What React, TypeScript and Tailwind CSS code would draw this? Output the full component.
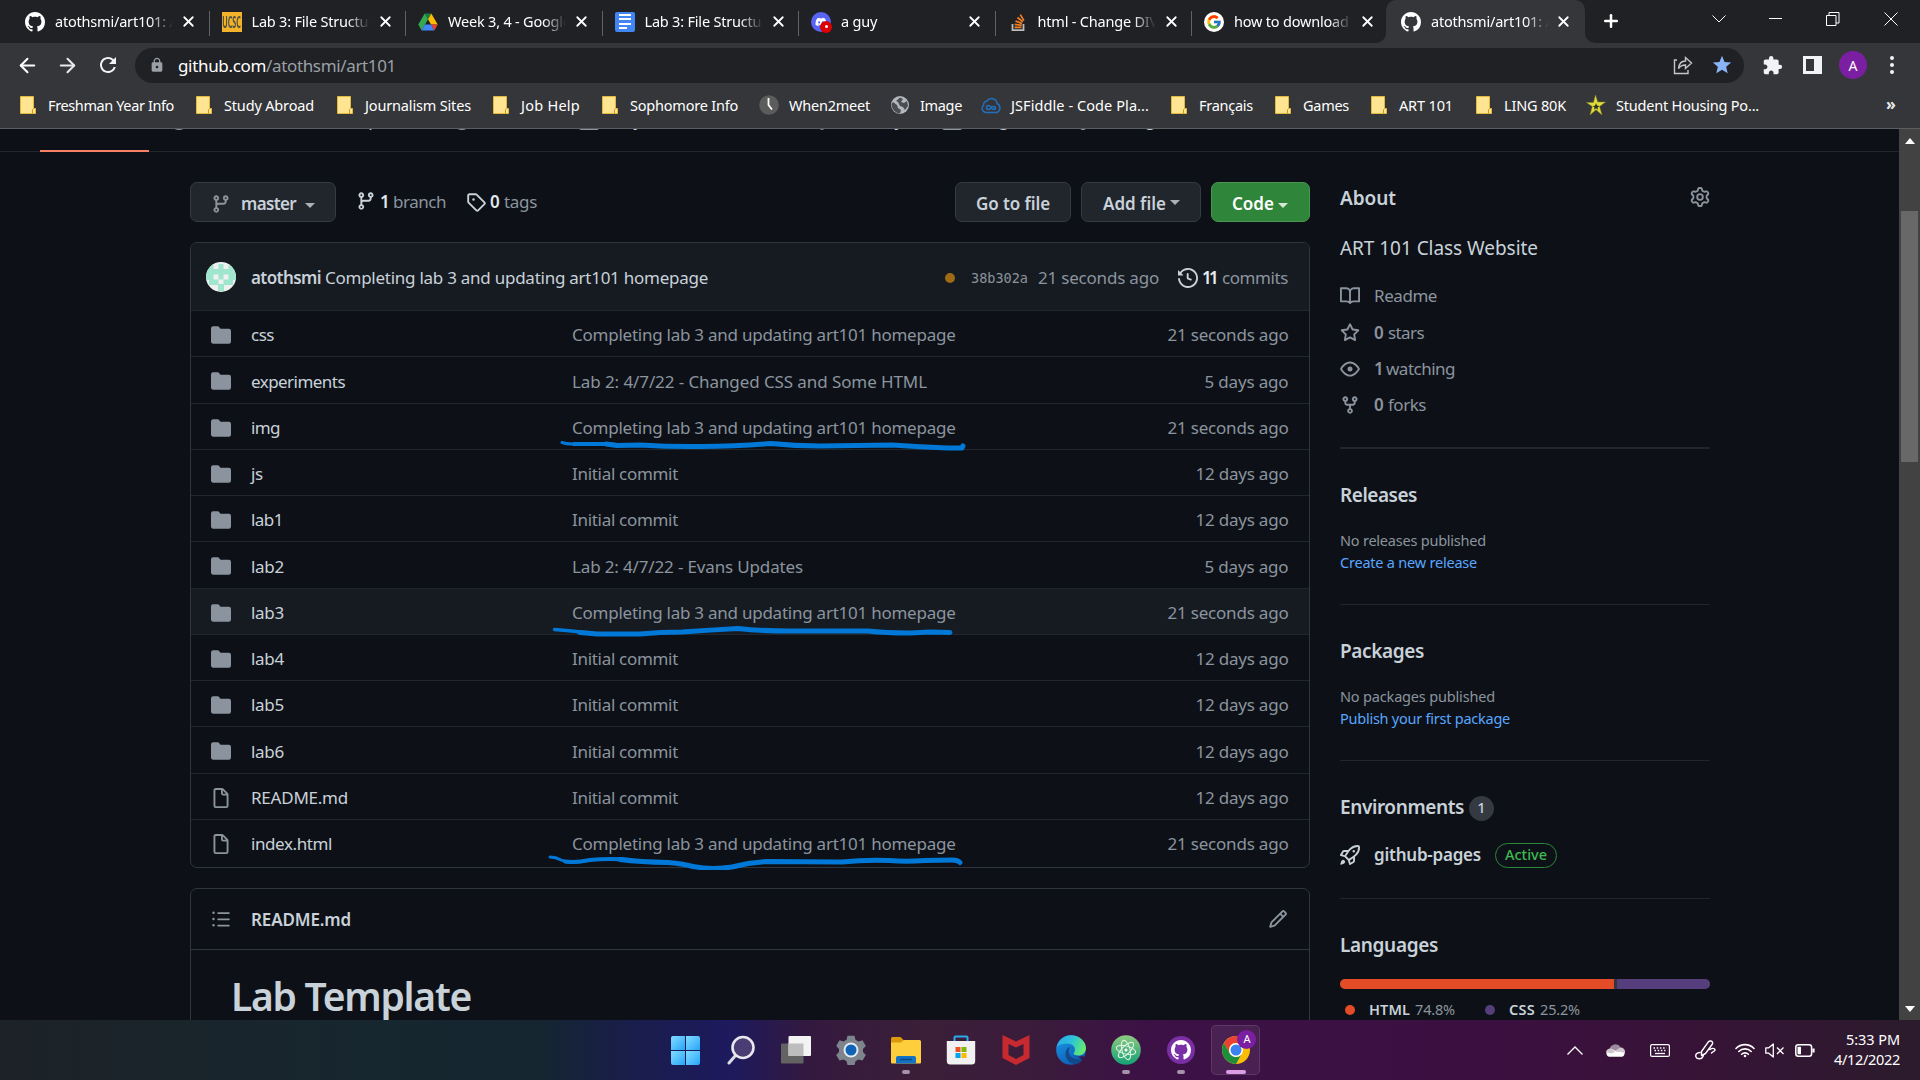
import React, { useLayoutEffect, useRef, useState } from "react";
import { FcGoogle } from "react-icons/fc";
import { FaDiscord } from "react-icons/fa";
import { MdExtension, MdRefresh, MdLock, MdStar } from "react-icons/md";
import { ArrowLeft, ArrowRight, X, Plus } from "lucide-react";

/* Text that is tracked so that it fills exactly `w` pixels. */
function T({ w, className = "", children }: { w: number; className?: string; children: string }) {
  const ref = useRef<HTMLSpanElement>(null);
  const [ls, setLs] = useState(0);
  useLayoutEffect(() => {
    const el = ref.current;
    if (!el) return;
    el.style.letterSpacing = "0px";
    const natural = el.getBoundingClientRect().width;
    const next = (w - natural) / children.length;
    el.style.letterSpacing = next + "px";
    setLs(next);
  }, [w, children]);
  return (
    <span ref={ref} className={"inline-block shrink-0 whitespace-pre " + className} style={{ letterSpacing: ls + "px" }}>
      {children}
    </span>
  );
}

const P = {
  branch:
    "M11.75 2.5a.75.75 0 100 1.5.75.75 0 000-1.5zm-2.25.75a2.25 2.25 0 113 2.122V6A2.5 2.5 0 0110 8.5H6a1 1 0 00-1 1v1.128a2.251 2.251 0 11-1.5 0V5.372a2.25 2.25 0 111.5 0v1.836A2.492 2.492 0 016 7h4a1 1 0 001-1v-.628A2.25 2.25 0 019.5 3.25zM4.25 12a.75.75 0 100 1.5.75.75 0 000-1.5zM3.5 3.25a.75.75 0 111.5 0 .75.75 0 01-1.5 0z",
  tag: "M2.5 7.775V2.75a.25.25 0 01.25-.25h5.025a.25.25 0 01.177.073l6.25 6.25a.25.25 0 010 .354l-5.025 5.025a.25.25 0 01-.354 0l-6.25-6.25a.25.25 0 01-.073-.177zm-1.5 0V2.75C1 1.784 1.784 1 2.75 1h5.025c.464 0 .91.184 1.238.513l6.25 6.25a1.75 1.75 0 010 2.474l-5.026 5.026a1.75 1.75 0 01-2.474 0l-6.25-6.25A1.75 1.75 0 011 7.775zM6 5a1 1 0 100 2 1 1 0 000-2z",
  history:
    "M1.643 3.143L.427 1.927A.25.25 0 000 2.104V5.75c0 .138.112.25.25.25h3.646a.25.25 0 00.177-.427L2.715 4.215a6.5 6.5 0 11-1.18 4.458.75.75 0 10-1.493.154 8.001 8.001 0 101.6-5.684zM7.75 4a.75.75 0 01.75.75v2.992l2.028.812a.75.75 0 01-.557 1.392l-2.5-1A.75.75 0 017 8.25v-3.5A.75.75 0 017.75 4z",
  folder:
    "M1.75 1A1.75 1.75 0 000 2.75v10.5C0 14.216.784 15 1.75 15h12.5A1.75 1.75 0 0016 13.25v-8.5A1.75 1.75 0 0014.25 3h-6.5a.25.25 0 01-.2-.1l-.9-1.2c-.33-.44-.85-.7-1.4-.7h-3.5z",
  file: "M3.75 1.5a.25.25 0 00-.25.25v12.5c0 .138.112.25.25.25h8.5a.25.25 0 00.25-.25V6H9.75A1.75 1.75 0 018 4.25V1.5H3.75zm5.75.56v2.19c0 .138.112.25.25.25h2.19L9.5 2.06zM2 1.75C2 .784 2.784 0 3.75 0h5.086c.464 0 .909.184 1.237.513l3.414 3.414c.329.328.513.773.513 1.237v9.086A1.75 1.75 0 0112.25 16h-8.5A1.75 1.75 0 012 14.25V1.75z",
  list: "M2 4a1 1 0 100-2 1 1 0 000 2zm3.75-1.5a.75.75 0 000 1.5h8.5a.75.75 0 000-1.5h-8.5zm0 5a.75.75 0 000 1.5h8.5a.75.75 0 000-1.5h-8.5zm0 5a.75.75 0 000 1.5h8.5a.75.75 0 000-1.5h-8.5zM3 8a1 1 0 11-2 0 1 1 0 012 0zm-1 6a1 1 0 100-2 1 1 0 000 2z",
  pencil:
    "M11.013 1.427a1.75 1.75 0 012.474 0l1.086 1.086a1.75 1.75 0 010 2.474l-8.61 8.61c-.21.21-.47.364-.756.445l-3.251.93a.75.75 0 01-.927-.928l.929-3.25a1.75 1.75 0 01.445-.758l8.61-8.61zm1.414 1.06a.25.25 0 00-.354 0L10.811 3.75l1.439 1.44 1.263-1.263a.25.25 0 000-.354l-1.086-1.086zM11.189 6.25L9.75 4.81l-6.286 6.287a.25.25 0 00-.064.108l-.558 1.953 1.953-.558a.249.249 0 00.108-.064l6.286-6.286z",
  book: "M0 1.75A.75.75 0 01.75 1h4.253c1.227 0 2.317.59 3 1.501A3.744 3.744 0 0111.006 1h4.245a.75.75 0 01.75.75v10.5a.75.75 0 01-.75.75h-4.507a2.25 2.25 0 00-1.591.659l-.622.621a.75.75 0 01-1.06 0l-.622-.621A2.25 2.25 0 005.258 13H.75a.75.75 0 01-.75-.75V1.75zm8.755 3a2.25 2.25 0 012.25-2.25H14.5v9h-3.757c-.71 0-1.4.201-1.992.572l.004-7.322zm-1.504 7.324l.004-5.073-.002-2.253A2.25 2.25 0 005.003 2.5H1.5v9h3.757a3.75 3.75 0 011.994.574z",
  star: "M8 .25a.75.75 0 01.673.418l1.882 3.815 4.21.612a.75.75 0 01.416 1.279l-3.046 2.97.719 4.192a.75.75 0 01-1.088.791L8 12.347l-3.766 1.98a.75.75 0 01-1.088-.79l.72-4.194L.818 6.374a.75.75 0 01.416-1.28l4.21-.611L7.327.668A.75.75 0 018 .25zm0 2.445L6.615 5.5a.75.75 0 01-.564.41l-3.097.45 2.24 2.184a.75.75 0 01.216.664l-.528 3.084 2.769-1.456a.75.75 0 01.698 0l2.77 1.456-.53-3.084a.75.75 0 01.216-.664l2.24-2.183-3.096-.45a.75.75 0 01-.564-.41L8 2.694v.001z",
  eye: "M1.679 7.932c.412-.621 1.242-1.75 2.366-2.717C5.175 4.242 6.527 3.5 8 3.5c1.473 0 2.824.742 3.955 1.715 1.124.967 1.954 2.096 2.366 2.717a.119.119 0 010 .136c-.412.621-1.242 1.75-2.366 2.717C10.825 11.758 9.473 12.5 8 12.5c-1.473 0-2.824-.742-3.955-1.715C2.92 9.818 2.09 8.69 1.679 8.068a.119.119 0 010-.136zM8 2c-1.981 0-3.67.992-4.933 2.078C1.797 5.169.88 6.423.43 7.1a1.619 1.619 0 000 1.798c.45.678 1.367 1.932 2.637 3.024C4.329 13.008 6.019 14 8 14c1.981 0 3.67-.992 4.933-2.078 1.27-1.091 2.187-2.345 2.637-3.023a1.619 1.619 0 000-1.798c-.45-.678-1.367-1.932-2.637-3.023C11.671 2.992 9.981 2 8 2zm0 8a2 2 0 100-4 2 2 0 000 4z",
  fork: "M5 3.25a.75.75 0 11-1.5 0 .75.75 0 011.5 0zm0 2.122a2.25 2.25 0 10-1.5 0v.878A2.25 2.25 0 005.75 8.5h1.5v2.128a2.251 2.251 0 101.5 0V8.5h1.5a2.25 2.25 0 002.25-2.25v-.878a2.25 2.25 0 10-1.5 0v.878a.75.75 0 01-.75.75h-4.5A.75.75 0 015 6.25v-.878zm3.75 7.378a.75.75 0 11-1.5 0 .75.75 0 011.5 0zm3-8.75a.75.75 0 100-1.5.75.75 0 000 1.5z",
  rocket:
    "M14.064 0a8.75 8.75 0 00-6.187 2.563l-.459.458c-.314.314-.616.641-.904.979H3.31a1.75 1.75 0 00-1.49.833L.11 7.607a.75.75 0 00.418 1.11l3.102.954c.037.051.079.1.124.145l2.429 2.428c.046.046.094.088.145.125l.954 3.102a.75.75 0 001.11.418l2.774-1.707a1.75 1.75 0 00.833-1.49V9.485c.338-.288.665-.59.979-.904l.458-.459A8.75 8.75 0 0016 1.936V1.75A1.75 1.75 0 0014.25 0h-.186zM10.5 10.625c-.088.06-.177.118-.266.175l-2.35 1.521.548 1.783 1.949-1.2a.25.25 0 00.119-.213v-2.066zM3.678 8.116L5.2 5.766c.058-.09.117-.178.176-.266H3.309a.25.25 0 00-.213.119l-1.2 1.95 1.782.547zm5.26-4.493A7.25 7.25 0 0114.063 1.5h.186a.25.25 0 01.25.25v.186a7.25 7.25 0 01-2.123 5.127l-.459.458a15.21 15.21 0 01-2.499 2.02l-2.317 1.5-2.143-2.143 1.5-2.317a15.25 15.25 0 012.02-2.5l.458-.458h.002zM12 5a1 1 0 11-2 0 1 1 0 012 0zm-8.44 9.56a1.5 1.5 0 10-2.12-2.12c-.734.73-1.047 2.332-1.15 3.003a.23.23 0 00.265.265c.671-.103 2.273-.416 3.005-1.148z",
  gear: "M8 0a8.2 8.2 0 0 1 .701.031C9.444.095 9.99.645 10.16 1.29l.288 1.107c.018.066.079.158.212.224.231.114.454.243.668.386.123.082.233.09.299.071l1.103-.303c.644-.176 1.392.021 1.82.63.27.385.506.792.704 1.218.315.675.111 1.422-.364 1.891l-.814.806c-.049.048-.098.147-.088.294.016.257.016.515 0 .772-.01.147.038.246.088.294l.814.806c.475.469.679 1.216.364 1.891a7.977 7.977 0 0 1-.704 1.217c-.428.61-1.176.807-1.82.63l-1.102-.302c-.067-.019-.177-.011-.3.071a5.909 5.909 0 0 1-.668.386c-.133.066-.194.158-.211.224l-.29 1.106c-.168.646-.715 1.196-1.458 1.26a8.006 8.006 0 0 1-1.402 0c-.743-.064-1.289-.614-1.458-1.26l-.289-1.106c-.018-.066-.079-.158-.212-.224a5.738 5.738 0 0 1-.668-.386c-.123-.082-.233-.09-.299-.071l-1.103.303c-.644.176-1.392-.021-1.82-.63a8.12 8.12 0 0 1-.704-1.218c-.315-.675-.111-1.422.363-1.891l.815-.806c.05-.048.098-.147.088-.294a6.214 6.214 0 0 1 0-.772c.01-.147-.038-.246-.088-.294l-.815-.806C.635 6.045.431 5.298.746 4.623a7.92 7.92 0 0 1 .704-1.217c.428-.61 1.176-.807 1.82-.63l1.102.302c.067.019.177.011.3-.071.214-.143.437-.272.668-.386.133-.066.194-.158.211-.224l.29-1.106C6.009.645 6.556.095 7.299.03 7.53.01 7.764 0 8 0Zm-.571 1.525c-.036.003-.108.036-.137.146l-.289 1.105c-.147.561-.549.967-.998 1.189-.173.086-.34.183-.5.29-.417.278-.97.423-1.529.27l-1.103-.303c-.109-.03-.175.016-.195.045-.22.312-.412.644-.573.99-.014.031-.021.11.059.19l.815.806c.411.406.562.957.53 1.456a4.709 4.709 0 0 0 0 .582c.032.499-.119 1.05-.53 1.456l-.815.806c-.081.08-.073.159-.059.19.162.346.353.677.573.989.02.03.085.076.195.046l1.102-.303c.56-.153 1.113-.008 1.53.27.161.107.328.204.501.29.447.222.85.629.997 1.189l.289 1.105c.029.109.101.143.137.146a6.6 6.6 0 0 0 1.142 0c.036-.003.108-.036.137-.146l.289-1.105c.147-.561.549-.967.998-1.189.173-.086.34-.183.5-.29.417-.278.97-.423 1.529-.27l1.103.303c.109.029.175-.016.195-.045.22-.313.411-.644.573-.99.014-.031.021-.11-.059-.19l-.815-.806c-.411-.406-.562-.957-.53-1.456a4.709 4.709 0 0 0 0-.582c-.032-.499.119-1.05.53-1.456l.815-.806c.081-.08.073-.159.059-.19a6.464 6.464 0 0 0-.573-.989c-.02-.03-.085-.076-.195-.046l-1.102.303c-.56.153-1.113.008-1.53-.27a4.44 4.44 0 0 0-.501-.29c-.447-.222-.85-.629-.997-1.189l-.289-1.105c-.029-.11-.101-.143-.137-.146a6.6 6.6 0 0 0-1.142 0ZM11 8a3 3 0 1 1-6 0 3 3 0 0 1 6 0ZM9.5 8a1.5 1.5 0 1 0-3.001.001A1.5 1.5 0 0 0 9.5 8Z",
  github:
    "M8 0C3.58 0 0 3.58 0 8c0 3.54 2.29 6.53 5.47 7.59.4.07.55-.17.55-.38 0-.19-.01-.82-.01-1.49-2.01.37-2.53-.49-2.69-.94-.09-.23-.48-.94-.82-1.13-.28-.15-.68-.52-.01-.53.63-.01 1.08.58 1.23.82.72 1.21 1.87.87 2.33.66.07-.52.28-.87.51-1.07-1.78-.2-3.64-.89-3.64-3.95 0-.87.31-1.59.82-2.15-.08-.2-.36-1.02.08-2.12 0 0 .67-.21 2.2.82.64-.18 1.32-.27 2-.27.68 0 1.36.09 2 .27 1.53-1.04 2.2-.82 2.2-.82.44 1.1.16 1.92.08 2.12.51.56.82 1.27.82 2.15 0 3.07-1.87 3.75-3.65 3.95.29.25.54.73.54 1.48 0 1.07-.01 1.93-.01 2.2 0 .21.15.46.55.38A8.013 8.013 0 0016 8c0-4.42-3.58-8-8-8z",
  issue: "M8 9.5a1.5 1.5 0 100-3 1.5 1.5 0 000 3zM8 0a8 8 0 100 16A8 8 0 008 0zM1.5 8a6.5 6.5 0 1113 0 6.5 6.5 0 01-13 0z",
  board: "M1.75 0A1.75 1.75 0 000 1.75v12.5C0 15.216.784 16 1.75 16h12.5A1.75 1.75 0 0016 14.25V1.75A1.75 1.75 0 0014.25 0zM1.5 1.75h13v12.5h-13z",
  shield: "M8 0L1 2.5V7.5C1 11.5 4 14.8 8 16c4-1.2 7-4.500 7-8.500V2.500z",
};

function Octicon({ d, className = "" }: { d: string; className?: string }) {
  return (
    <svg viewBox="0 0 16 16" fill="currentColor" className={"h-5 w-5 shrink-0 " + className}>
      <path fillRule="evenodd" d={d} />
    </svg>
  );
}

function DriveIcon() {
  return (
    <svg viewBox="0 0 20 18" className="h-[18px] w-5">
      <path d="M6.7 0.600h6.600L10 6.300z" fill="#188038" />
      <path d="M6.700.600L.300 11.600l3.300 5.800L10 6.300z" fill="#34a853" />
      <path d="M13.300.600l6.400 11h-6.600L10 6.300z" fill="#fbbc04" />
      <path d="M6.900 11.600h6.200l3.300 5.800H3.600z" fill="#4285f4" />
      <path d="M13.100 11.600h6.600l-3.300 5.800z" fill="#ea4335" />
    </svg>
  );
}

function DocsIcon() {
  return (
    <span className="flex h-5 w-5 flex-col justify-center gap-[2.500px] rounded-[2px] bg-[#4285f4] px-1">
      <span className="h-[2px] bg-white" />
      <span className="h-[2px] bg-white" />
      <span className="h-[2px] bg-white" />
      <span className="h-[2px] w-2 bg-white" />
    </span>
  );
}

const GithubTab = () => <Octicon d={P.github} className="text-white" />;

const tabs = [
  { title: "atothsmi/art101: ART 101", icon: <GithubTab /> },
  {
    title: "Lab 3: File Structure",
    icon: (
      <span className="flex h-5 w-5 items-center justify-center overflow-hidden bg-[#f3b229]">
        <span className="scale-x-[0.6] scale-y-140 text-[12px] leading-none font-bold text-[#4d5344]">UCSC</span>
      </span>
    ),
  },
  { title: "Week 3, 4 - Google Drive", icon: <DriveIcon /> },
  { title: "Lab 3: File Structure", icon: <DocsIcon /> },
  {
    title: "a guy",
    icon: (
      <span className="relative flex h-5 w-5 items-center justify-center rounded-full bg-[#5865f2]">
        <FaDiscord className="h-3 w-3 text-white" />
        <span className="absolute -right-px -bottom-px flex h-3 w-3 items-center justify-center rounded-full bg-[#dc0000]">
          <span className="h-[3px] w-[3px] rounded-full bg-white" />
        </span>
      </span>
    ),
  },
  {
    title: "html - Change DIV",
    icon: (
      <svg viewBox="0 0 20 20" className="h-5 w-5">
        <path d="M4.500 12v6.200h11V12" fill="none" stroke="#bcbbbb" strokeWidth="1.800" />
        <path d="M6.500 15.400h7M6.700 12.300l6.900 1M7.500 9l6.500 2.600M9.500 5.500l5.300 4.400M12.300 2.600l3.600 6" stroke="#f48024" strokeWidth="1.700" />
      </svg>
    ),
  },
  {
    title: "how to download a",
    icon: (
      <span className="flex h-5 w-5 items-center justify-center rounded-full bg-white">
        <FcGoogle className="h-4 w-4" />
      </span>
    ),
  },
];

function TabText({ children }: { children: string }) {
  return (
    <span className="mb-[2px] ml-2.5 w-[119px] overflow-hidden text-[14.5px] leading-5 tracking-[-0.2px] whitespace-nowrap text-white [mask-image:linear-gradient(90deg,#000_80%,transparent_99%)]">
      {children}
    </span>
  );
}

function TabStrip() {
  return (
    <div className="flex h-[43px] shrink-0 bg-[#202124] pl-[13px]">
      {tabs.map((t, i) => (
        <div key={i} className="flex h-[43px] w-[196.500px] shrink-0 items-center">
          <div className="flex h-full w-full items-center pl-3">
            {t.icon}
            <TabText>{t.title}</TabText>
            <X className="ml-[6px] h-[17px] w-[17px] text-white" strokeWidth={2.5} />
          </div>
          {i < 6 && <div className="mt-1 h-[25px] w-px shrink-0 bg-[#5f6368]" />}
        </div>
      ))}
      <div className="relative -ml-[2.500px] flex h-[43px] w-[199px] items-center rounded-t-[10px] bg-[#35363a] pl-[15px]">
        <svg viewBox="0 0 10 10" className="absolute bottom-0 -left-[10px] h-[10px] w-[10px]">
          <path d="M10 0v10H0A10 10 0 0010 0z" fill="#35363a" />
        </svg>
        <svg viewBox="0 0 10 10" className="absolute -right-[10px] bottom-0 h-[10px] w-[10px]">
          <path d="M0 0v10h10A10 10 0 010 0z" fill="#35363a" />
        </svg>
        <GithubTab />
        <TabText>atothsmi/art101: ART 101</TabText>
        <X className="ml-[5px] h-[17px] w-[17px] text-white" strokeWidth={2.5} />
      </div>
      <Plus className="mt-[11px] ml-[16px] h-5 w-5 text-white" strokeWidth={3} />
      <div className="mr-[22px] ml-auto flex h-[37px] items-center text-white">
        <svg viewBox="0 0 14 8" className="h-2 w-[14px]">
          <path d="M.5.5L7 7l6.500-6.500" fill="none" stroke="currentColor" />
        </svg>
        <span className="ml-[43px] h-px w-[13px] bg-white" />
        <svg viewBox="0 0 14 14" className="ml-[44px] h-[14px] w-[14px]">
          <path d="M.5 3.500h9.500v10H.5zM3 3.500V.5h10v10.500h-3" fill="none" stroke="currentColor" />
        </svg>
        <svg viewBox="0 0 14 14" className="ml-[44px] h-[14px] w-[14px]">
          <path d="M.5.5l13 13M13.500.5l-13 13" fill="none" stroke="currentColor" />
        </svg>
      </div>
    </div>
  );
}

function Toolbar() {
  return (
    <div className="flex h-[44px] shrink-0 items-center bg-[#35363a] pl-[16px]">
      <ArrowLeft className="h-[23px] w-[23px] text-white" strokeWidth={2.1} />
      <ArrowRight className="ml-[17px] h-[23px] w-[23px] text-[#e8eaed]" strokeWidth={2.1} />
      <MdRefresh className="ml-[17px] h-6 w-6 text-[#f1f3f4]" />
      <div className="ml-[15px] flex h-[35px] w-[1609px] items-center rounded-full bg-[#202124] pl-[14px]">
        <MdLock className="h-4 w-4 text-[#9aa0a6]" />
        <span className="ml-[13px] flex pt-px text-[17px] leading-6">
          <T w={88} className="text-white">github.com</T>
          <T w={130} className="text-[#9aa0a6]">/atothsmi/art101</T>
        </span>
        <svg viewBox="0 0 20 20" className="ml-auto h-5 w-5" fill="none" stroke="#c4c7c9" strokeWidth="1.400">
          <path d="M4 5H1.500v13.500h13.500V15M5.500 13.500c.5-5 3.500-7.500 7-7.500V2.500l6 5.500-6 5.500V10c-3 0-5 .5-7 3.500z" />
        </svg>
        <MdStar className="mr-[11px] ml-[18px] h-[22px] w-[22px] text-[#8ab4f8]" />
      </div>
      <MdExtension className="ml-[18px] h-[21px] w-[21px] text-[#f1f3f4]" />
      <span className="ml-[20px] flex h-[18px] w-[19px] border-[3px] border-r-[8px] border-[#f1f3f4]" />
      <span className="ml-[17px] flex h-7 w-7 items-center justify-center rounded-full bg-[#7b1fa2] text-[14px] text-white">A</span>
      <span className="ml-[23px] flex flex-col gap-[3px]">
        <span className="h-1 w-1 rounded-full bg-[#f1f3f4]" />
        <span className="h-1 w-1 rounded-full bg-[#f1f3f4]" />
        <span className="h-1 w-1 rounded-full bg-[#f1f3f4]" />
      </span>
    </div>
  );
}

function YellowFolder() {
  return (
    <svg viewBox="0 0 16 18" className="h-[18px] w-4">
      <path d="M.5.500h13v12h2v5H.5z" fill="#ffe591" stroke="#e3b93c" />
      <path d="M12.500 17.500v-4l1-1" fill="none" stroke="#c79a1e" />
    </svg>
  );
}

const bookmarks: { label: string; x: number; w: number; icon?: React.ReactNode }[] = [
  { label: "Freshman Year Info", x: 18, w: 126 },
  { label: "Study Abroad", x: 194, w: 90 },
  { label: "Journalism Sites", x: 335, w: 106 },
  { label: "Job Help", x: 491, w: 59 },
  { label: "Sophomore Info", x: 600, w: 108 },
  {
    label: "When2meet",
    x: 759,
    w: 81,
    icon: (
      <svg viewBox="0 0 20 20" className="h-5 w-5">
        <circle cx="10" cy="10" r="9.800" fill="#5c5c5c" />
        <path d="M9.500 3v7l3.500 4.500" fill="none" stroke="#fff" strokeWidth="1.800" />
      </svg>
    ),
  },
  {
    label: "Image",
    x: 890,
    w: 42,
    icon: (
      <svg viewBox="0 0 20 20" className="h-5 w-5">
        <circle cx="10" cy="10" r="9" fill="#b4b8bc" />
        <path d="M3 7l4 3 1 3 3 2-1 3.500C5 18 1.500 14 1.500 9zM10 2.500l3 1.500-2 3 3 1 3-2 1 5-3 4-2-3-3-1-2-4-2-1z" fill="#4a4d51" />
      </svg>
    ),
  },
  {
    label: "JSFiddle - Code Pla...",
    x: 981,
    w: 138,
    icon: (
      <svg viewBox="0 0 20 20" className="h-5 w-5" fill="none" stroke="#2270c0" strokeWidth="1.400">
        <path d="M5 17.500a4 4 0 01-2.500-7A4 4 0 016 6a5.500 5.500 0 0110 2.500 4.800 4.800 0 01-.5 9z" />
        <path d="M10 12c-1.500-2-4.500-2-4.500.500s3 2.500 4.500.500 4.500-2 4.500 0-3 2-4.500-1z" strokeWidth="1.600" />
      </svg>
    ),
  },
  { label: "Français", x: 1169, w: 54 },
  { label: "Games", x: 1273, w: 46 },
  { label: "ART 101", x: 1369, w: 54 },
  { label: "LING 80K", x: 1474, w: 62 },
  {
    label: "Student Housing Po...",
    x: 1586,
    w: 143,
    icon: (
      <svg viewBox="0 0 20 20" className="h-5 w-5">
        <path d="M9.500 0l2.200 7h7.800l-6 4.500 2.500 8.500-6-5.300L4 20l2.300-8.500L.5 7.500h7z" fill="#e0dc3c" stroke="#8a8620" strokeWidth=".5" />
        <path d="M10 8l1 2.500 2.500.5-2 1.500.5 2.200-2-1.400-2 1.400.6-2.200-1.800-1.500 2.300-.3z" fill="#2b2b20" />
      </svg>
    ),
  },
];

function Bookmarks() {
  return (
    <div className="flex h-[42px] shrink-0 items-center border-b border-[#5b5d60] bg-[#35363a] pb-[5px] pl-[18px] text-[14.5px] text-white">
      {bookmarks.map((b, i) => (
        <div
          key={b.label}
          className="flex shrink-0 items-center"
          style={{ width: (bookmarks[i + 1]?.x ?? 1880) - b.x }}
        >
          <span className="flex w-[30px] shrink-0 items-center">
            {b.icon ?? <span className="pl-[2px]"><YellowFolder /></span>}
          </span>
          <T w={b.w} className="mb-px leading-5">{b.label}</T>
        </div>
      ))}
      <span className="mb-[3px] ml-[6px] text-[16px] leading-5 font-bold text-[#e8eaed]">»</span>
    </div>
  );
}

const nav = [
  { label: "Code", icon: P.branch, x: 49, w: 40 },
  { label: "Issues", icon: P.issue, x: 168.5, w: 49 },
  { label: "Pull requests", icon: P.branch, x: 283, w: 103 },
  { label: "Actions", icon: P.issue, x: 452, w: 58 },
  { label: "Projects", icon: P.board, x: 579, w: 62 },
  { label: "Wiki", icon: P.book, x: 710, w: 32 },
  { label: "Security", icon: P.shield, x: 812, w: 62 },
  { label: "Insights", icon: P.board, x: 942, w: 62 },
  { label: "Settings", icon: P.gear, x: 1073, w: 61 },
];

function RepoNav() {
  return (
    <div className="h-[23px] shrink-0 overflow-hidden shadow-[inset_0_-1px_0_#21262d]">
      <div className="-mt-[31px] flex h-[43px] items-center pl-[49px] text-[17px] text-[#c9d1d9]">
        {nav.map((n, i) => (
          <div key={n.label} className="flex shrink-0 items-center" style={{ width: (nav[i + 1]?.x ?? 1200) - n.x }}>
            <Octicon d={n.icon} className="mr-[9px] text-[#8b949e]" />
            <T w={n.w} className="leading-6">{n.label}</T>
          </div>
        ))}
      </div>
      <div className="mt-[9px] ml-10 h-[2px] w-[109px] bg-[#f78166]" />
    </div>
  );
}

function Caret({ className = "" }: { className?: string }) {
  return <span className={"h-0 w-0 border-x-[5px] border-t-[5px] border-x-transparent " + className} />;
}

const DONE = "Completing lab 3 and updating art101 homepage";
type Row = { name: string; nw: number; msg: string; mw: number; when: string; file?: boolean; hot?: boolean };
const S21 = "21 seconds ago";
const D12 = "12 days ago";
const rows: Row[] = [
  { name: "css", nw: 23, msg: DONE, mw: 383.5, when: S21 },
  { name: "experiments", nw: 94, msg: "Lab 2: 4/7/22 - Changed CSS and Some HTML", mw: 355, when: "5 days ago" },
  { name: "img", nw: 29, msg: DONE, mw: 383.5, when: S21 },
  { name: "js", nw: 12, msg: "Initial commit", mw: 106, when: D12 },
  { name: "lab1", nw: 32, msg: "Initial commit", mw: 106, when: D12 },
  { name: "lab2", nw: 33, msg: "Lab 2: 4/7/22 - Evans Updates", mw: 231, when: "5 days ago" },
  { name: "lab3", nw: 33, msg: DONE, mw: 383.5, when: S21, hot: true },
  { name: "lab4", nw: 33, msg: "Initial commit", mw: 106, when: D12 },
  { name: "lab5", nw: 33, msg: "Initial commit", mw: 106, when: D12 },
  { name: "lab6", nw: 33, msg: "Initial commit", mw: 106, when: D12 },
  { name: "README.md", nw: 97, msg: "Initial commit", mw: 106, when: D12, file: true },
  { name: "index.html", nw: 81, msg: DONE, mw: 383.5, when: S21, file: true },
];
const whenWidth: Record<string, number> = { [S21]: 121, [D12]: 93, "5 days ago": 84 };

function Actions() {
  return (
    <div className="flex h-10 items-center text-[17px]">
      <div className="flex h-10 w-[146px] items-center rounded-[7px] border border-[#363b42] bg-[#21262d] pt-[3px] pl-5 font-semibold text-[#c9d1d9]">
        <Octicon d={P.branch} className="text-[#8b949e]" />
        <T w={55} className="ml-[10px] leading-6">master</T>
        <Caret className="mt-[3px] ml-[9px] border-t-[#a9b0b8]" />
      </div>
      <div className="flex items-center text-[#8b949e]">
        <Octicon d={P.branch} className="mb-[2px] ml-5 text-[#c9d1d9]" />
        <T w={9} className="ml-[4px] font-semibold text-[#e0e6ec]">1</T>
        <T w={53} className="ml-[4px]">branch</T>
        <Octicon d={P.tag} className="ml-[20px] text-[#c9d1d9]" />
        <T w={10} className="ml-[4px] font-semibold text-[#e0e6ec]">0</T>
        <T w={33} className="ml-[4px]">tags</T>
      </div>
      <div className="ml-auto flex gap-[10px] font-semibold">
        <div className="flex h-10 w-[116px] items-center justify-center rounded-[7px] border border-[#363b42] bg-[#21262d] pt-[3px] text-[#c9d1d9]">
          <T w={74}>Go to file</T>
        </div>
        <div className="flex h-10 w-[120px] items-center rounded-[7px] border border-[#363b42] bg-[#21262d] pt-[3px] pl-[21px] text-[#c9d1d9]">
          <T w={63}>Add file</T>
          <Caret className="mb-[3px] ml-[4px] border-t-[#a9b0b8]" />
        </div>
        <div className="flex h-10 w-[99px] items-center rounded-[7px] border border-[#4a9651] bg-[#2f8539] pt-[3px] pl-[20px] text-white">
          <T w={42}>Code</T>
          <Caret className="mt-[3px] ml-[4px] border-t-[#d5e7d7]" />
        </div>
      </div>
    </div>
  );
}

function Avatar() {
  return (
    <svg viewBox="0 0 30 30" className="mb-px h-[30px] w-[30px] rounded-full">
      <rect width="30" height="30" fill="#f0f0f0" />
      <path d="M3 2h24v5h3v11h-3v5H19v-5h-8v5H3v-5H0V7h3z" fill="#a0e6ce" />
      <path d="M11 17h8v6h-1v6h-6v-6h-1z" fill="#a0e6ce" />
      <path d="M7.500 12.500h5v5h-5zM17.500 12.500h5v5h-5zM7.500 2h5v5h-5zM17.500 2h5v5h-5zM12.500 17.500h5v4.500h-5z" fill="#f0f0f0" />
    </svg>
  );
}

function FileTable() {
  return (
    <div className="relative mt-5 rounded-[7px] border border-[#30363d]">
      <div className="flex h-[67px] items-center rounded-t-[6px] bg-[#161b22] pt-[2px] pr-[21px] pl-[15px] text-[17px] text-[#8b949e]">
        <Avatar />
        <T w={70} className="ml-[15px] font-semibold text-[#c9d1d9]">atothsmi</T>
        <T w={383} className="ml-[4px] text-[#c9d1d9]">{DONE}</T>
        <span className="ml-auto h-[10px] w-[10px] rounded-full bg-[#9e6a15]" />
        <T w={57} className="mt-[2px] ml-[16px] font-['DejaVu_Sans_Mono','Noto_Sans_Mono',monospace] text-[13.5px]">38b302a</T>
        <T w={121} className="ml-[10px]">{S21}</T>
        <Octicon d={P.history} className="ml-[19px] text-[#c9d1d9]" />
        <T w={14} className="ml-[4px] font-semibold text-[#e6edf3]">11</T>
        <T w={66} className="ml-[6px]">commits</T>
      </div>
      {rows.map((r) => (
        <div
          key={r.name}
          className={
            "flex h-[46.250px] items-center border-t border-[#21262d] pt-[3px] pr-[20.500px] pl-[20px] text-[17px] text-[#8b949e] last-of-type:h-[48.500px] last-of-type:pb-[2px] " +
            (r.hot ? "bg-[#161b22]" : "")
          }
        >
          <Octicon d={r.file ? P.file : P.folder} />
          <span className="ml-5 w-[321px]">
            <T w={r.nw} className="text-[#c9d1d9]">{r.name}</T>
          </span>
          <T w={r.mw}>{r.msg}</T>
          <span className="ml-auto">
            <T w={whenWidth[r.when]}>{r.when}</T>
          </span>
        </div>
      ))}
      <svg
        viewBox="190 242 1120 628"
        className="pointer-events-none absolute -top-px -left-px h-[628px] w-[1120px]"
        fill="none"
        stroke="#0078d7"
        strokeWidth="5"
        strokeLinecap="round"
        strokeLinejoin="round"
      >
        <path strokeWidth="3" d="M562 442.500Q566 444 572 444L608 444L617 445" />
        <path strokeWidth="4" d="M574 444L608 444L617 445" />
        <path d="M606 444L617 445.500L640 445Q672 447 700 446.500Q740 446 771 443.500Q795 446 820 446L892 445Q920 447 948 448L962 448M962 447.500L963 446" />
        <path strokeWidth="3.500" d="M554.500 629.500L572 631L597 634" />
        <path d="M580 632.500L597 634L640 634Q660 632 682 632Q710 630 738 628.500Q760 631 790 631L868 631Q885 633 910 633L930 632L950 632.500" />
        <path strokeWidth="3" d="M550 857Q556 857 561 860Q570 864 585 861" />
        <path strokeWidth="4" d="M565 861.500Q575 863 590 860Q610 858 630 860" />
        <path d="M620 859.500Q640 862 668 862.500Q685 864 693 866.500Q712 870 732 867Q750 862 768 861.500L842 862Q865 859.500 890 860.500Q905 862 925 860.500L952 860Q958 860 960 862.500" />
      </svg>
    </div>
  );
}

function Readme() {
  return (
    <div className="mt-5 h-[200px] rounded-[7px] border border-[#30363d]">
      <div className="flex h-[61px] items-center border-b border-[#30363d] pr-[21px] pl-5 text-[#8b949e]">
        <Octicon d={P.list} />
        <T w={100} className="ml-5 text-[17px] font-semibold text-[#c9d1d9]">README.md</T>
        <Octicon d={P.pencil} className="ml-auto" />
      </div>
      <div className="pt-[18px] pl-[40px]">
        <T w={240} className="text-[39px] leading-[56px] font-semibold text-[#c9d1d9]">Lab Template</T>
      </div>
    </div>
  );
}

function Stat({ icon, n, nw, label, lw, className }: { icon: string; n?: string; nw?: number; label: string; lw: number; className: string }) {
  return (
    <div className={"flex h-6 items-center text-[17px] text-[#8b949e] " + className}>
      <Octicon d={icon} className="mr-[14px]" />
      {n && <T w={nw ?? 9} className="mr-[5px] font-semibold">{n}</T>}
      <T w={lw}>{label}</T>
    </div>
  );
}

function Sidebar() {
  return (
    <div className="w-[370px] text-[#c9d1d9]">
      <div className="flex h-7 items-center justify-between">
        <T w={56} className="text-[19px] font-semibold">About</T>
        <Octicon d={P.gear} className="mb-[2px] text-[#8b949e]" />
      </div>
      <T w={198} className="mt-[22px] block text-[19px] leading-7">ART 101 Class Website</T>
      <Stat className="mt-[22px]" icon={P.book} label="Readme" lw={63} />
      <Stat className="mt-[13px]" icon={P.star} n="0" nw={9} label="stars" lw={36} />
      <Stat className="mt-[12px]" icon={P.eye} n="1" nw={7} label="watching" lw={69} />
      <Stat className="mt-[12px]" icon={P.fork} n="0" nw={9} label="forks" lw={38} />
      <div className="mt-[30px] h-[2px] bg-[#21262d]" />
      <T w={77} className="mt-[32px] block text-[19px] leading-7 font-semibold">Releases</T>
      <div className="mt-[20px] flex flex-col text-[14.5px] leading-[22px]">
        <T w={146} className="self-start text-[#8b949e]">No releases published</T>
        <T w={137} className="self-start text-[#58a6ff]">Create a new release</T>
      </div>
      <div className="mt-[31px] h-px bg-[#21262d]" />
      <T w={84} className="mt-[32px] block text-[19px] leading-7 font-semibold">Packages</T>
      <div className="mt-[20px] flex flex-col text-[14.5px] leading-[22px]">
        <T w={155} className="self-start text-[#8b949e]">No packages published</T>
        <T w={170} className="self-start text-[#58a6ff]">Publish your first package</T>
      </div>
      <div className="mt-[31px] h-px bg-[#21262d]" />
      <div className="mt-[32px] flex h-7 items-center">
        <T w={124} className="text-[19px] font-semibold">Environments</T>
        <span className="mt-[2px] ml-[5px] flex h-[25px] w-[25px] items-center justify-center rounded-full bg-[#353a42] text-[14.5px] font-medium">1</span>
      </div>
      <div className="mt-[21px] flex h-[26px] items-center">
        <Octicon d={P.rocket} />
        <T w={107} className="ml-[14px] text-[17px] font-semibold">github-pages</T>
        <span className="ml-[14px] flex h-[25px] w-[62px] items-center justify-center rounded-full border border-[#2a8737] text-[14.5px] font-medium text-[#3fb950]">
          <T w={42}>Active</T>
        </span>
      </div>
      <div className="mt-[30px] h-px bg-[#21262d]" />
      <T w={98} className="mt-[32px] block text-[19px] leading-7 font-semibold">Languages</T>
      <div className="mt-[20px] flex h-[10px] overflow-hidden rounded-full bg-[#30363d]">
        <div className="w-[274px] bg-[#e34c26]" />
        <div className="ml-[3px] flex-1 bg-[#563d7c]" />
      </div>
      <div className="mt-[11px] flex h-5 items-center text-[14.5px] text-[#8b949e]">
        <span className="ml-[5px] h-[10px] w-[10px] rounded-full bg-[#e34c26]" />
        <T w={41} className="ml-[14px] font-semibold text-[#c9d1d9]">HTML</T>
        <T w={40} className="ml-[5px]">74.8%</T>
        <span className="ml-[30px] h-[10px] w-[10px] rounded-full bg-[#563d7c]" />
        <T w={26} className="ml-[14px] font-semibold text-[#c9d1d9]">CSS</T>
        <T w={40} className="ml-[5px]">25.2%</T>
      </div>
    </div>
  );
}

const Edge = () => (
  <svg viewBox="0 0 30 30" className="h-[30px] w-[30px]">
    <defs>
      <linearGradient id="eg" x1="0" y1="0.2" x2="1" y2="0.5">
        <stop offset="0" stopColor="#2aa7e8" />
        <stop offset=".5" stopColor="#2cc3d8" />
        <stop offset="1" stopColor="#66eb6e" />
      </linearGradient>
      <linearGradient id="eb" x1="0" y1="0" x2="0.6" y2="1">
        <stop offset="0" stopColor="#1a9be6" />
        <stop offset="1" stopColor="#0f5bb5" />
      </linearGradient>
    </defs>
    <circle cx="15" cy="15" r="14.800" fill="url(#eb)" />
    <path d="M.5 12.500C2 5 8 .2 15 .2 23.500.2 30 6.500 30 13c0 5-4 7.500-7.500 7.500-3 0-5-1-5-2 0-.8 1.500-1.500 1.500-4 0-3-3-6-8-6-4.500 0-8.500 1.500-10.500 4z" fill="url(#eg)" />
    <path d="M12.500 12.500c-2 1.500-3 4-3 6.500 0 5 4 9.500 10 10 3.500-.8 6.500-3 8.500-6-2 1-4.500 1.500-7 1.200-5-.6-8.500-4-8.500-8.200 0-1.500 1-3 2-3.500z" fill="#114a8b" />
    <path d="M18 20.500c1.500 1.500 5 1.800 8.500.2l3.500 3-2 3.300-4-4z" fill="#3d1347" opacity=".9" />
  </svg>
);

const Chrome = () => (
  <svg viewBox="0 0 28 28" className="h-7 w-7">
    <circle cx="14" cy="14" r="14" fill="#fbbc04" />
    <path d="M1.900 7A14 14 0 0126.100 7H14a7 7 0 00-6.100 10.500z" fill="#ea4335" />
    <path d="M1.900 7l6.060 10.500A7 7 0 0014 21c1 0 3 0 5-2l-5 9A14 14 0 011.900 7z" fill="#1e8e3e" />
    <circle cx="14" cy="14" r="7" fill="#fff" />
    <circle cx="14" cy="14" r="5.500" fill="#3b82f0" />
  </svg>
);

const GearApp = () => (
  <svg viewBox="0 0 30 30" className="h-[30px] w-[30px]">
    <path
      d="M11.500.800h7l1 4 3 1.700 4-1.200 3.300 5.700-2.800 3v3l2.800 3-3.300 5.500-4-1-3 1.700-1 3.700h-7l-1-3.700-3-1.700-4 1L.2 20l2.800-3v-3l-2.800-3 3.300-5.700 4 1.200 3-1.700z"
      fill="#7d848c"
    />
    <circle cx="15" cy="15" r="7.500" fill="#e5eaf0" />
    <circle cx="15" cy="15" r="5.500" fill="#0f63b5" />
  </svg>
);

const apps: { icon: React.ReactNode; run?: boolean }[] = [
  {
    icon: (
      <span className="grid h-[29px] w-[29px] grid-cols-2 gap-px overflow-hidden rounded-[2px] [&>span]:bg-linear-to-br [&>span]:from-[#7fdcff] [&>span]:to-[#1fa5f8]">
        <span /><span /><span /><span />
      </span>
    ),
  },
  {
    icon: (
      <svg viewBox="0 0 30 30" className="h-[30px] w-[30px]">
        <path d="M9.500 20.500L3 28" stroke="#dcdce4" strokeWidth="3" strokeLinecap="round" />
        <circle cx="17" cy="12.500" r="10.500" fill="#4a3d74" stroke="#e8e8ee" strokeWidth="2.600" />
      </svg>
    ),
  },
  {
    icon: (
      <svg viewBox="0 0 30 30" className="h-[30px] w-[30px]">
        <rect x="0" y="8.500" width="22.500" height="20" rx="1" fill="#636363" />
        <rect x="7.500" y="1" width="22.500" height="20" rx="1" fill="#f3f3f3" />
        <path d="M7.500 8.500h15V21h-15z" fill="#bdbdbd" />
      </svg>
    ),
  },
  { icon: <GearApp /> },
  {
    run: true,
    icon: (
      <svg viewBox="0 0 30 30" className="h-[30px] w-[30px]">
        <path d="M0 3.500a1.500 1.500 0 011.500-1.500h8l3 3H28v5H0z" fill="#dd9a08" />
        <path d="M0 7.500h10L13 5h15.500A1.500 1.500 0 0130 6.500v21a1 1 0 01-1 1H1a1 1 0 01-1-1z" fill="#ffce3d" />
        <path d="M5 28.500V23a2 2 0 012-2h16a2 2 0 012 2v5.500z" fill="#1272c4" />
        <path d="M9 24.500h12" stroke="#0a4a86" strokeWidth="1.500" />
      </svg>
    ),
  },
  {
    icon: (
      <svg viewBox="0 0 30 30" className="h-[30px] w-[30px]">
        <path d="M8.500 8V2.500a1 1 0 011-1h11a1 1 0 011 1V8" fill="none" stroke="#2aa9ee" strokeWidth="2" />
        <path d="M.8 6h28.400v20a3.500 3.500 0 01-3.500 3.500H4.300A3.500 3.500 0 01.8 26z" fill="#f1f1f1" />
        <path d="M9.500 12h5v5h-5z" fill="#f25022" />
        <path d="M15.500 12h5v5h-5z" fill="#7fba00" />
        <path d="M9.500 18h5v5h-5z" fill="#00a4ef" />
        <path d="M15.500 18h5v5h-5z" fill="#ffb900" />
      </svg>
    ),
  },
  {
    icon: (
      <svg viewBox="0 0 28 30" className="h-[30px] w-7">
        <path d="M.5 0L14 6.500 27.500 0v23L14 30 .5 23zM6.500 9v11l7.500 4 7.500-4V9L14 12.500z" fill="#c62a30" fillRule="evenodd" />
      </svg>
    ),
  },
  { icon: <Edge /> },
  {
    run: true,
    icon: (
      <svg viewBox="0 0 30 30" className="h-[30px] w-[30px]">
        <defs>
          <linearGradient id="at" x1="0" y1="0" x2="0" y2="1">
            <stop offset="0" stopColor="#8fca82" />
            <stop offset="1" stopColor="#12a173" />
          </linearGradient>
        </defs>
        <circle cx="15" cy="15" r="14.800" fill="url(#at)" />
        <g fill="none" stroke="#e6f5ea" strokeWidth="1">
          <ellipse cx="15" cy="15" rx="10" ry="4" transform="rotate(15 15 15)" />
          <ellipse cx="15" cy="15" rx="10" ry="4" transform="rotate(75 15 15)" />
          <ellipse cx="15" cy="15" rx="10" ry="4" transform="rotate(135 15 15)" />
        </g>
        <circle cx="15" cy="15" r="1.500" fill="#fff" />
      </svg>
    ),
  },
  {
    run: true,
    icon: (
      <span className="flex h-7 w-7 items-center justify-center rounded-full bg-[#7a2fa5]">
        <Octicon d={P.github} className="text-white" />
      </span>
    ),
  },
];

function Taskbar() {
  return (
    <div className="flex h-[60px] shrink-0 bg-[linear-gradient(90deg,#1c2227_0%,#172730_20%,#14252f_28%,#191d4c_33%,#1d1a5e_38%,#33193f_42%,#3b1f38_48%,#3a1b3b_54%,#3c1146_60%,#3b1040_78%,#371337_88%,#2b1b2c_100%)]">
      <div className="flex pl-[658px]">
        {apps.map((a, i) => (
          <div key={i} className="flex h-[60px] w-[55.050px] flex-col items-center">
            <div className="mt-[15px] flex h-[30px] items-center">{a.icon}</div>
            {a.run && <span className="mt-[5px] h-1 w-2 rounded-full bg-[#a592a8]" />}
          </div>
        ))}
        <div className="relative mt-[5px] ml-[3px] flex h-[50px] w-[49px] flex-col items-center rounded-[5px] border border-white/10 bg-white/7 pt-[10px]">
          <Chrome />
          <span className="mt-[6px] h-1 w-5 rounded-full bg-[#dc9ce6]" />
          <span className="absolute top-1 right-[3px] flex h-[19px] w-[19px] items-center justify-center rounded-full bg-[#7b1fa2] text-[11px] text-white">A</span>
        </div>
      </div>
      <div className="ml-auto flex items-center pr-5 text-white">
        <svg viewBox="0 0 16 9" className="h-[9px] w-4" fill="none" stroke="currentColor" strokeWidth="1.300">
          <path d="M.5 8.500L8 1l7.500 7.500" />
        </svg>
        <svg viewBox="0 0 20 13" className="ml-[22px] h-[13px] w-5">
          <path d="M4.500 5.500A6 6 0 0115.500 3l-3 5z" fill="#9c8a9e" />
          <path d="M15 3.500a4.500 4.500 0 015 5.500l-1 2-9-4z" fill="#cfc6d0" />
          <path d="M4.500 12.800A4 4 0 014.500 5c3-.5 5 1.500 7 2.500 2 1 5-.5 7.500 1.500a3 3 0 01-2 3.800z" fill="#fff" />
          <path d="M1 8a4 4 0 017-2l2 2-4 1.500z" fill="#cfc6d0" />
        </svg>
        <svg viewBox="0 0 20 13" className="ml-[25px] h-[13px] w-5" fill="none" stroke="currentColor" strokeWidth="1.200">
          <rect x=".6" y=".6" width="18.800" height="11.800" rx="1.500" />
          <path d="M3.500 4h13M4.500 6.500h11" strokeDasharray="1.500 1.700" strokeWidth="1.500" />
          <path d="M5 9.500h10" strokeWidth="1.300" />
        </svg>
        <svg viewBox="0 0 21 20" className="ml-[25px] h-5 w-[21px]" fill="none" stroke="currentColor" strokeWidth="1.400" strokeLinecap="round" strokeLinejoin="round">
          <path d="M6.500 15.500l0-4L13 2.300c1-1.300 3-1.800 4-.8s.7 2.300-.3 3.500L10.500 13.500l-4 2zM15 9.500c2-1.500 4.500-1.500 5 0 .5 1.800-2 1.500-3.500 3.500M5 12.500c-3 0-5 2-4 4.500s6 2.500 7-.5l.5-1.500" />
        </svg>
        <svg viewBox="0 0 20 15" className="ml-[19px] h-[15px] w-5" fill="none" stroke="currentColor" strokeWidth="1.600" strokeLinecap="round">
          <path d="M1 5.500a12.500 12.500 0 0118 0M3.800 8.500a8.600 8.600 0 0112.400 0M6.600 11.300a4.800 4.800 0 016.800 0" />
          <circle cx="10" cy="13" r="1.300" fill="currentColor" stroke="none" />
        </svg>
        <svg viewBox="0 0 20 15" className="ml-[10px] h-[15px] w-5" fill="none" stroke="currentColor" strokeWidth="1.300" strokeLinejoin="round">
          <path d="M.8 4.800h3L8.300 1v13L3.800 10.200h-3zM12 4.500l6.500 6.500M18.500 4.500L12 11" />
        </svg>
        <svg viewBox="0 0 20 13" className="ml-[10px] h-[13px] w-5" fill="none" stroke="currentColor" strokeWidth="1.500">
          <rect x=".8" y=".8" width="15.800" height="11.400" rx="2.500" />
          <rect x="2.500" y="2.800" width="3.500" height="7.400" rx=".5" fill="currentColor" stroke="none" />
          <path d="M18.500 4.500v4" strokeWidth="2.200" />
        </svg>
        <div className="mb-[2px] ml-[19px] flex flex-col items-end text-[14.5px] leading-5">
          <T w={54}>5:33 PM</T>
          <T w={66}>4/12/2022</T>
        </div>
      </div>
    </div>
  );
}

export default function App() {
  return (
    <div className="flex h-[1080px] w-[1920px] flex-col overflow-hidden bg-[#0d1117] font-['Noto_Sans','Open_Sans',sans-serif]">
      <TabStrip />
      <Toolbar />
      <Bookmarks />
      <div className="flex h-[891px] shrink-0 overflow-hidden">
        <div className="flex w-[1899px] flex-col overflow-hidden">
          <RepoNav />
          <div className="flex gap-[30px] pt-[30px] pl-[190px]">
            <div className="w-[1120px]">
              <Actions />
              <FileTable />
              <Readme />
            </div>
            <div className="pt-[2px]">
              <Sidebar />
            </div>
          </div>
        </div>
        <div className="flex w-[21px] flex-col items-center bg-[#424242]">
          <span className="mt-[9px] h-0 w-0 border-x-[5px] border-b-[6px] border-x-transparent border-b-white" />
          <div className="mt-[67px] h-[251px] w-[17px] bg-[#686868]" />
          <span className="mt-auto mb-[8px] h-0 w-0 border-x-[5px] border-t-[6px] border-x-transparent border-t-white" />
        </div>
      </div>
      <Taskbar />
    </div>
  );
}
